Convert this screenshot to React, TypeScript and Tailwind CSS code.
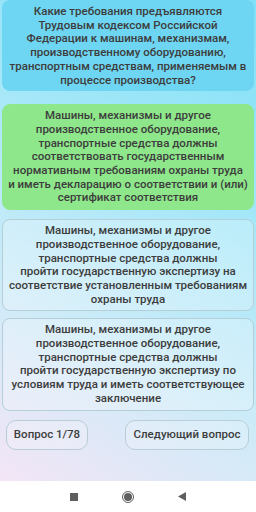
const answers = [
  {
    text: 'Машины, механизмы и другое производственное оборудование, транспортные средства должны соответствовать государственным нормативным требованиям охраны труда и иметь декларацию о соответствии и (или) сертификат соответствия',
    correct: true,
  },
  {
    text: 'Машины, механизмы и другое производственное оборудование, транспортные средства должны пройти государственную экспертизу на соответствие установленным требованиям охраны труда',
    correct: false,
  },
  {
    text: 'Машины, механизмы и другое производственное оборудование, транспортные средства должны пройти государственную экспертизу по условиям труда и иметь соответствующее заключение',
    correct: false,
  },
]

const lines = [
  [
    'Машины, механизмы и другое',
    'производственное оборудование,',
    'транспортные средства должны',
    'соответствовать государственным',
    'нормативным требованиям охраны труда',
    'и иметь декларацию о соответствии и (или)',
    'сертификат соответствия',
  ],
  [
    'Машины, механизмы и другое',
    'производственное оборудование,',
    'транспортные средства должны',
    'пройти государственную экспертизу на',
    'соответствие установленным требованиям',
    'охраны труда',
  ],
  [
    'Машины, механизмы и другое',
    'производственное оборудование,',
    'транспортные средства должны',
    'пройти государственную экспертизу по',
    'условиям труда и иметь соответствующее',
    'заключение',
  ],
]

const question = [
  'Какие требования предъявляются',
  'Трудовым кодексом Российской',
  'Федерации к машинам, механизмам,',
  'производственному оборудованию,',
  'транспортным средствам, применяемым в',
  'процессе производства?',
]

const gaps = ['mt-[13px]', 'mt-[9px]', 'mt-[7px]']

export default function App() {
  return (
    <div
      className="w-[256px] h-[512px] flex flex-col overflow-hidden text-[#3d3d3d]"
      style={{ fontFamily: 'Roboto, "Noto Sans", sans-serif' }}
    >
      <div className="flex-1 flex flex-col px-[2px] bg-[linear-gradient(210deg,#7fe0f7_0%,#a3e7f8_35%,#cdebf8_68%,#f3e5f6_100%)]">
        <div className="rounded-[8px] bg-[#6ed6f3] pt-[5px] pb-[4px] px-1 text-center text-[11.5px] leading-[13.7px] font-medium">
          {question.map((l) => (
            <div key={l} className="whitespace-nowrap">{l}</div>
          ))}
        </div>

        {answers.map((a, i) => (
          <div
            key={i}
            title={a.text}
            className={
              gaps[i] +
              ' rounded-[8px] py-[4px] px-1 text-center text-[11.5px] leading-[13.7px] font-medium border ' +
              (a.correct
                ? 'bg-[#8ee78b] border-[#8ee78b]'
                : 'bg-white/25 border-[#b4cfd8]')
            }
          >
            {lines[i].map((l) => (
              <div key={l} className="whitespace-nowrap">{l}</div>
            ))}
          </div>
        ))}

        <div className="mt-[9px] flex justify-between pl-[4px] pr-[5px] text-[11.5px] font-medium">
          <button className="h-[30px] w-[82px] rounded-[10px] border border-[#b8cdd6] bg-white/20 text-[#3d3d3d]">
            Вопрос 1/78
          </button>
          <button className="h-[30px] w-[124px] rounded-[10px] border border-[#b8cdd6] bg-white/20 text-[#3d3d3d]">
            Следующий вопрос
          </button>
        </div>
      </div>

      <div className="h-[31px] bg-white flex items-center justify-center gap-[44px]">
        <div className="w-[8px] h-[8px] bg-[#5f5f5f]" />
        <div className="w-[12px] h-[12px] rounded-full border border-[#5f5f5f] flex items-center justify-center">
          <div className="w-[8px] h-[8px] rounded-full bg-[#5f5f5f]" />
        </div>
        <svg width="8" height="9" viewBox="0 0 8 9">
          <path d="M0 4.5 L8 0 L8 9 Z" fill="#5f5f5f" />
        </svg>
      </div>
    </div>
  )
}
